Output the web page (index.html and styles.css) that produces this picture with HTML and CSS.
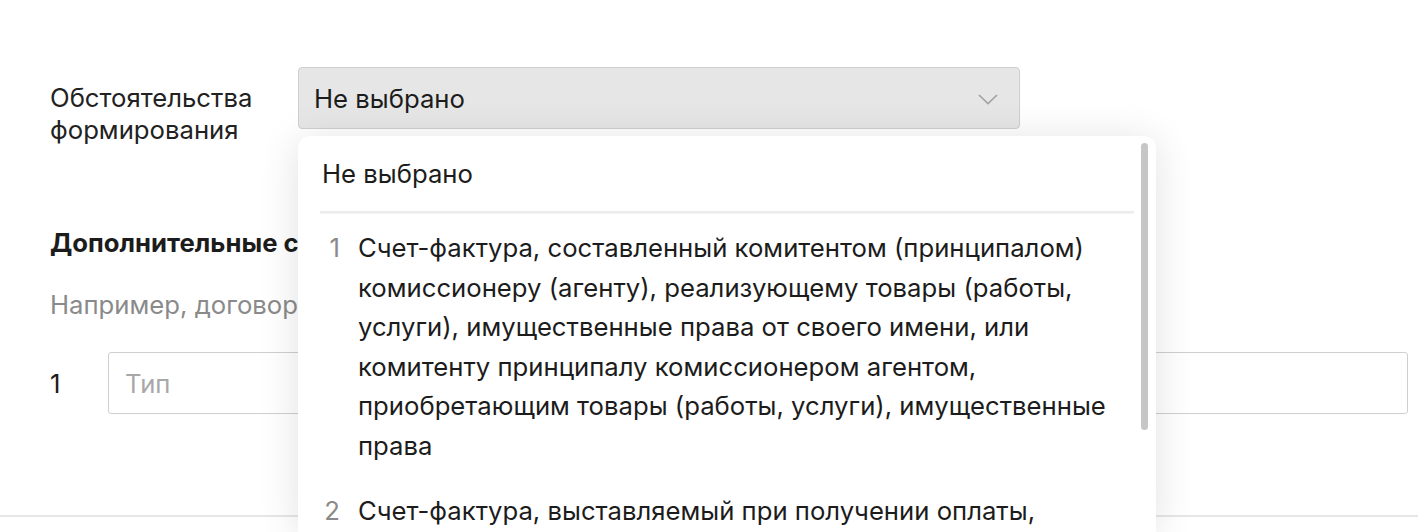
FILE: index.html
```html
<!DOCTYPE html>
<html lang="ru">
<head>
  <meta charset="UTF-8" />
  <title>Счет-фактура</title>
  <link rel="stylesheet" href="styles.css">
</head>
<body>

  <div class="form">

    <!-- Обстоятельства формирования -->
    <div class="row">
      <div class="label">Обстоятельства<br>формирования</div>
      <div class="select-wrap">
        <div class="select">
          <span>Не выбрано</span>
          <svg class="chevron" width="20" height="11" viewBox="0 0 20 11">
            <path d="M1 1 L10 9.5 L19 1" fill="none" stroke="#a3a3a3" stroke-width="1.7"/>
          </svg>
        </div>

        <!-- выпадающий список -->
        <div class="dropdown">
          <div class="option-empty">Не выбрано</div>
          <div class="divider"></div>
          <div class="option">
            <span class="num">1</span>
            <span class="text">Счет-фактура, составленный комитентом (принципалом) комиссионеру (агенту), реализующему товары (работы, услуги), имущественные права от своего имени, или комитенту принципалу комиссионером агентом, приобретающим товары (работы, услуги), имущественные права</span>
          </div>
          <div class="option">
            <span class="num">2</span>
            <span class="text">Счет-фактура, выставляемый при получении оплаты, частичной оплаты в счет предстоящих поставок товаров</span>
          </div>
          <div class="scrollbar"></div>
        </div>
      </div>
    </div>

    <!-- Дополнительные сведения -->
    <h3 class="section-title">Дополнительные с</h3>
    <p class="hint">Например, договор</p>

    <div class="input-row">
      <span class="index">1</span>
      <input type="text" class="field" placeholder="Тип" />
    </div>
  </div>

  <div class="bottom-line"></div>

</body>
</html>
```

FILE: styles.css
```css
* {
  box-sizing: border-box;
}

body {
  margin: 0;
  padding: 0;
  font-family: Inter, 'Noto Sans', sans-serif;
  font-size: 25.7px;
  color: #1c1c1c;
  background: #fff;
  height: 532px;
  overflow: hidden;
}

.form {
  padding: 67px 10px 0 50px;
}

.row {
  display: flex;
  align-items: flex-start;
}

.label {
  width: 248px;
  padding-top: 15px;
  line-height: 32px;
  color: #222;
}

.select-wrap {
  position: relative;
  width: 722px;
  z-index: 2;
}

.select {
  height: 62px;
  display: flex;
  align-items: center;
  justify-content: space-between;
  padding: 0 21px 0 15px;
  background: #e6e6e6;
  border: 1px solid #cfcfcf;
  border-radius: 4px;
}

.chevron {
  margin-top: 2px;
}

/* выпадающий список */
.dropdown {
  position: absolute;
  top: 69px;
  left: 0;
  width: 858px;
  height: 396px;
  overflow: hidden;
  background: #fff;
  border-radius: 12px 12px 0 0;
  box-shadow: 0 4px 40px rgba(0, 0, 0, 0.12);
  padding: 22px 0 0 24px;
}

.option-empty {
  line-height: 32px;
}

.divider {
  margin: 21px 22px 0 -2px;
  height: 3px;
  background: #ececec;
  border-bottom: 1px solid #f5f5f5;
}

.option {
  display: flex;
  gap: 18px;
  margin-top: 14px;
  line-height: 39.5px;
  padding-right: 26px;
}

.option + .option {
  margin-top: 26px;
}

.num {
  width: 18px;
  flex-shrink: 0;
  text-align: right;
  color: #8a8a8a;
}

.scrollbar {
  position: absolute;
  top: 7px;
  right: 8px;
  width: 7px;
  height: 287px;
  border-radius: 4px;
  background: #c6c6c6;
}

.section-title {
  margin: 81px 0 0;
  font-size: 25.7px;
  font-weight: bold;
  line-height: 32px;
}

.hint {
  margin: 30px 0 0;
  line-height: 32px;
  color: #8a8a8a;
}

.input-row {
  display: flex;
  align-items: center;
  margin-top: 31px;
}

.index {
  width: 58px;
}

.field {
  flex: 1;
  height: 62px;
  padding: 0 16px;
  font-family: inherit;
  font-size: 25.7px;
  border: 1px solid #cfcfcf;
  border-radius: 3px;
  outline: none;
}

.field::placeholder {
  color: #a8a8a8;
}

.bottom-line {
  position: absolute;
  left: 0;
  right: 0;
  top: 515px;
  height: 2px;
  background: #e6e6e6;
}
```
